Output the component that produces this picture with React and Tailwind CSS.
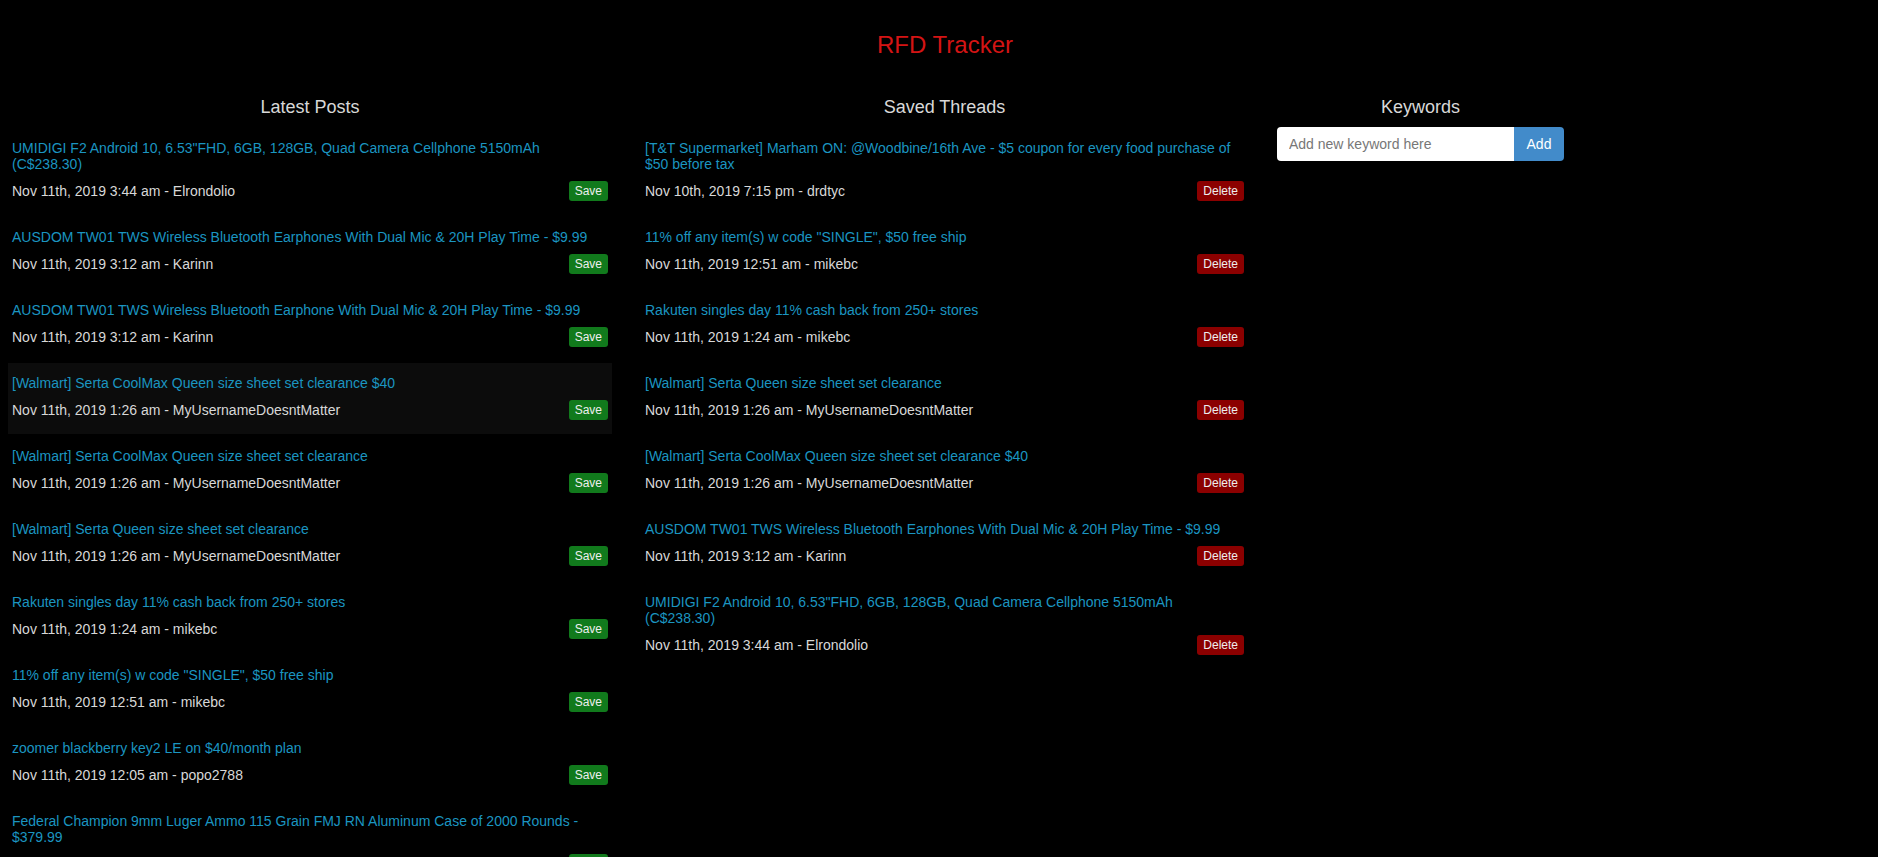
import { useState } from "react";

const latestPosts = [
  {
    title: 'UMIDIGI F2 Android 10, 6.53"FHD, 6GB, 128GB, Quad Camera Cellphone 5150mAh (C$238.30)',
    date: "Nov 11th, 2019 3:44 am",
    author: "Elrondolio",
  },
  {
    title: "AUSDOM TW01 TWS Wireless Bluetooth Earphones With Dual Mic & 20H Play Time - $9.99",
    date: "Nov 11th, 2019 3:12 am",
    author: "Karinn",
  },
  {
    title: "AUSDOM TW01 TWS Wireless Bluetooth Earphone With Dual Mic & 20H Play Time - $9.99",
    date: "Nov 11th, 2019 3:12 am",
    author: "Karinn",
  },
  {
    title: "[Walmart] Serta CoolMax Queen size sheet set clearance $40",
    date: "Nov 11th, 2019 1:26 am",
    author: "MyUsernameDoesntMatter",
    active: true,
  },
  {
    title: "[Walmart] Serta CoolMax Queen size sheet set clearance",
    date: "Nov 11th, 2019 1:26 am",
    author: "MyUsernameDoesntMatter",
  },
  {
    title: "[Walmart] Serta Queen size sheet set clearance",
    date: "Nov 11th, 2019 1:26 am",
    author: "MyUsernameDoesntMatter",
  },
  {
    title: "Rakuten singles day 11% cash back from 250+ stores",
    date: "Nov 11th, 2019 1:24 am",
    author: "mikebc",
  },
  {
    title: '11% off any item(s) w code "SINGLE", $50 free ship',
    date: "Nov 11th, 2019 12:51 am",
    author: "mikebc",
  },
  {
    title: "zoomer blackberry key2 LE on $40/month plan",
    date: "Nov 11th, 2019 12:05 am",
    author: "popo2788",
  },
  {
    title: "Federal Champion 9mm Luger Ammo 115 Grain FMJ RN Aluminum Case of 2000 Rounds - $379.99",
    date: "Nov 10th, 2019 11:52 pm",
    author: "shooter88",
  },
];

const savedThreads = [
  {
    title: "[T&T Supermarket] Marham ON: @Woodbine/16th Ave - $5 coupon for every food purchase of $50 before tax",
    date: "Nov 10th, 2019 7:15 pm",
    author: "drdtyc",
  },
  {
    title: '11% off any item(s) w code "SINGLE", $50 free ship',
    date: "Nov 11th, 2019 12:51 am",
    author: "mikebc",
  },
  {
    title: "Rakuten singles day 11% cash back from 250+ stores",
    date: "Nov 11th, 2019 1:24 am",
    author: "mikebc",
  },
  {
    title: "[Walmart] Serta Queen size sheet set clearance",
    date: "Nov 11th, 2019 1:26 am",
    author: "MyUsernameDoesntMatter",
  },
  {
    title: "[Walmart] Serta CoolMax Queen size sheet set clearance $40",
    date: "Nov 11th, 2019 1:26 am",
    author: "MyUsernameDoesntMatter",
  },
  {
    title: "AUSDOM TW01 TWS Wireless Bluetooth Earphones With Dual Mic & 20H Play Time - $9.99",
    date: "Nov 11th, 2019 3:12 am",
    author: "Karinn",
  },
  {
    title: 'UMIDIGI F2 Android 10, 6.53"FHD, 6GB, 128GB, Quad Camera Cellphone 5150mAh (C$238.30)',
    date: "Nov 11th, 2019 3:44 am",
    author: "Elrondolio",
  },
];

function Thread({ post, saved }) {
  return (
    <div
      className={`mb-0.5 px-1 pb-[14px] pt-3 hover:bg-[#0c0c0c] ${
        post.active ? "bg-[#0c0c0c]" : ""
      }`}
    >
      <a href="#" className="block text-[14px] leading-4 text-[#1b95c0]">
        {post.title}
      </a>
      <div className="mt-[9px] flex h-5 items-center justify-between text-[14px] text-[#d8d8d8]">
        <span>
          {post.date} - {post.author}
        </span>
        {saved ? (
          <button className="rounded-[3px] bg-[#8b0000] px-1.5 py-0.5 text-xs leading-4 text-[#eeeeee]">
            Delete
          </button>
        ) : (
          <button className="rounded-[3px] bg-[#117a1c] px-1.5 py-0.5 text-xs leading-4 text-[#eeeeee]">
            Save
          </button>
        )}
      </div>
    </div>
  );
}

export default function App() {
  const [keyword, setKeyword] = useState("");

  return (
    <div className="min-h-screen bg-black font-['Liberation_Sans',Arial,sans-serif]">
      <h1 className="pl-3 pt-[31px] text-center text-[24px] leading-[28px] text-[#d41414]">
        RFD Tracker
      </h1>

      <div className="mt-[38px] flex items-start gap-[29px] pl-2">
        <div className="w-[604px]">
          <h2 className="mb-[10px] text-center text-[18px] leading-[21px] text-[#d8d8d8]">
            Latest Posts
          </h2>
          {latestPosts.map((post, i) => (
            <Thread key={i} post={post} />
          ))}
        </div>

        <div className="w-[607px]">
          <h2 className="mb-[10px] text-center text-[18px] leading-[21px] text-[#d8d8d8]">
            Saved Threads
          </h2>
          {savedThreads.map((post, i) => (
            <Thread key={i} post={post} saved />
          ))}
        </div>

        <div className="w-[287px]">
          <h2 className="mb-[9px] text-center text-[18px] leading-[21px] text-[#d8d8d8]">
            Keywords
          </h2>
          <form
            className="flex h-[34px]"
            onSubmit={(e) => {
              e.preventDefault();
              setKeyword("");
            }}
          >
            <input
              className="min-w-0 flex-1 rounded-l bg-white px-3 text-[14px] text-[#333] outline-none placeholder:text-[#777]"
              type="text"
              placeholder="Add new keyword here"
              value={keyword}
              onChange={(e) => setKeyword(e.target.value)}
            />
            <button
              type="submit"
              className="w-[50px] rounded-r bg-[#428bca] text-[14px] text-white"
            >
              Add
            </button>
          </form>
        </div>
      </div>
    </div>
  );
}
